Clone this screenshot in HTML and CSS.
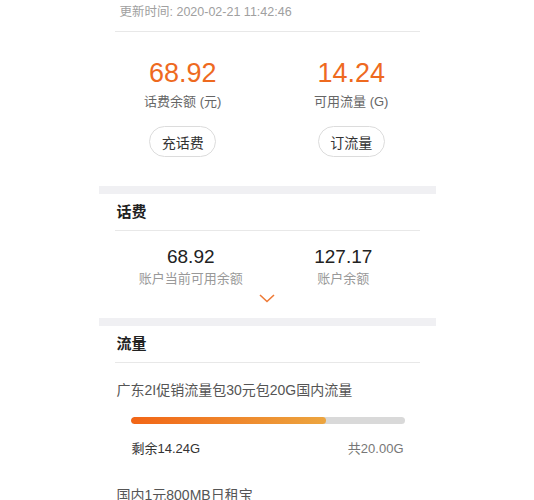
FILE: index.html
```html
<!DOCTYPE html>
<html lang="zh-CN">
<head>
  <meta charset="UTF-8">
  <title>我的账户</title>
  <link rel="stylesheet" href="styles.css">
</head>
<body>
  <div class="page">

    <!-- 概览 -->
    <div class="summary">
      <div class="update-time">更新时间: 2020-02-21 11:42:46</div>
      <div class="summary-row">
        <div class="summary-col">
          <div class="summary-num">68.92</div>
          <div class="summary-label">话费余额 (元)</div>
          <button class="btn-pill">充话费</button>
        </div>
        <div class="summary-col">
          <div class="summary-num">14.24</div>
          <div class="summary-label">可用流量 (G)</div>
          <button class="btn-pill">订流量</button>
        </div>
      </div>
    </div>

    <div class="gap"></div>

    <!-- 话费 -->
    <div class="section">
      <div class="section-title">话费</div>
      <div class="fee-row">
        <div class="fee-col">
          <div class="fee-num">68.92</div>
          <div class="fee-label">账户当前可用余额</div>
        </div>
        <div class="fee-col">
          <div class="fee-num">127.17</div>
          <div class="fee-label">账户余额</div>
        </div>
      </div>
      <div class="more">
        <svg width="16" height="9" viewBox="0 0 16 9"><polyline points="1,1 8,7.5 15,1" fill="none" stroke="#ee7a36" stroke-width="1.6"/></svg>
      </div>
    </div>

    <div class="gap"></div>

    <!-- 流量 -->
    <div class="section">
      <div class="section-title">流量</div>
      <div class="pkg">
        <div class="pkg-name">广东2I促销流量包30元包20G国内流量</div>
        <div class="bar"><div class="bar-fill" style="width: 71.2%"></div></div>
        <div class="pkg-info">
          <span class="pkg-left">剩余14.24G</span>
          <span class="pkg-total">共20.00G</span>
        </div>
      </div>
      <div class="pkg">
        <div class="pkg-name">国内1元800MB日租宝</div>
      </div>
    </div>

  </div>
</body>
</html>
```

FILE: styles.css
```css
body {
  margin: 0;
  padding: 0;
  background: #fff;
  font-family: "Liberation Sans", "Noto Sans CJK SC", sans-serif;
  color: #333;
}
.page {
  width: 337px;
  margin: 0 auto;
}
.update-time {
  margin: 0 16px;
  padding: 4px 0 11px 5px;
  line-height: 16px;
  font-size: 12.5px;
  color: #a0a0a0;
  border-bottom: 1px solid #e8e8e8;
}
.summary-row {
  display: flex;
  padding: 25px 0 29px;
}
.summary-col {
  flex: 1;
  display: flex;
  flex-direction: column;
  align-items: center;
}
.summary-num {
  font-size: 27px;
  line-height: 32px;
  color: #ee6a1f;
}
.summary-label {
  margin-top: 4px;
  font-size: 13px;
  line-height: 18px;
  color: #666;
}
.btn-pill {
  margin-top: 15px;
  width: 67px;
  height: 31px;
  padding: 0;
  background: #fff;
  border: 1px solid #dcdcdc;
  border-radius: 16px;
  font-family: inherit;
  font-size: 14px;
  color: #333;
}
.gap {
  height: 8px;
  background: #f0f0f3;
}
.section {
  padding: 0 16px;
}
.section-title {
  height: 36px;
  line-height: 36px;
  padding-left: 2px;
  font-size: 15px;
  font-weight: bold;
  color: #222;
  border-bottom: 1px solid #e8e8e8;
}
.fee-row {
  display: flex;
  padding-top: 15px;
}
.fee-col {
  flex: 1;
  text-align: center;
}
.fee-num {
  font-size: 19px;
  line-height: 22px;
  color: #222;
}
.fee-label {
  margin-top: 2px;
  font-size: 13px;
  line-height: 18px;
  color: #999;
}
.more {
  display: flex;
  justify-content: center;
  padding: 6px 0 15px;
}
.more svg {
  display: block;
}
.pkg {
  padding-top: 17px;
}
.pkg + .pkg {
  padding-top: 27px;
}
.pkg-name {
  padding-left: 2px;
  font-size: 14px;
  line-height: 20px;
  color: #555;
}
.bar {
  margin: 17px 15px 0 16px;
  height: 7px;
  border-radius: 4px;
  background: #d9d9d9;
  overflow: hidden;
}
.bar-fill {
  height: 100%;
  border-radius: 4px;
  background: linear-gradient(to right, #f26516, #eca53f);
}
.pkg-info {
  display: flex;
  justify-content: space-between;
  margin: 16px 16px 0 17px;
  font-size: 13px;
  line-height: 18px;
}
.pkg-left {
  color: #333;
}
.pkg-total {
  color: #777;
}
```
